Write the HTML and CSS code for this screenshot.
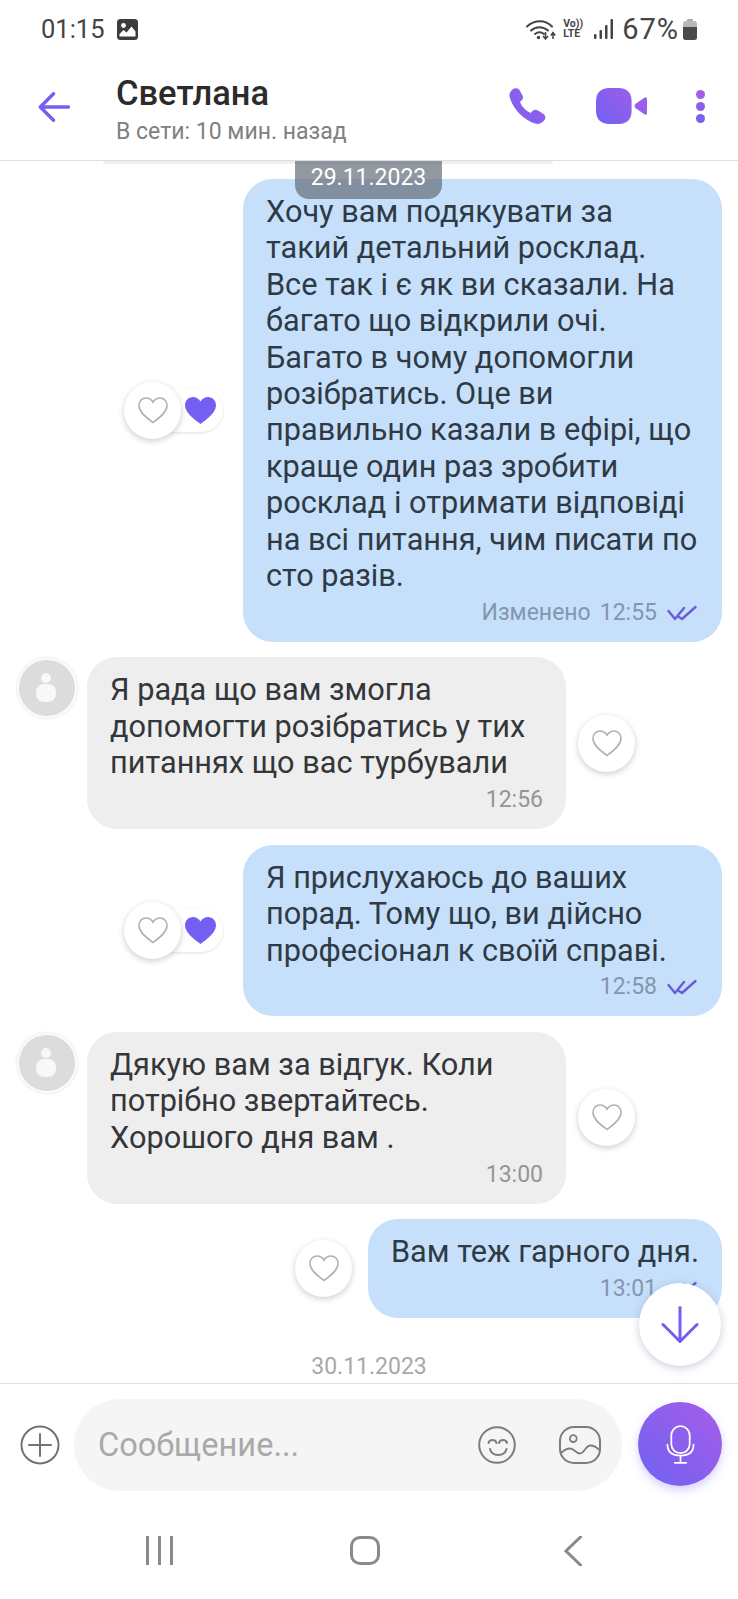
FILE: index.html
```html
<!DOCTYPE html>
<html lang="uk">
<head>
<meta charset="utf-8">
<title>Светлана</title>
<link rel="stylesheet" href="styles.css">
</head>
<body>
<div class="app">
  <div class="statusbar">
    <span class="clock">01:15</span>
    <svg class="sb-img" viewBox="0 0 21 21"><rect width="21" height="21" rx="3.5" fill="#3c3c3c"/><circle cx="6.5" cy="6.5" r="2.4" fill="#fff"/><path d="M2.5 17.5V15l4-4 3 2.5 5-6 4 5v5z" fill="#fff"/></svg>
    <div class="sb-right">
      <svg class="sb-wifi" viewBox="0 0 31 21"><g fill="none" stroke="#444" stroke-width="2" stroke-linecap="round"><path d="M1 7.5C8.5.5 19.500.5 26 7.500"/><path d="M5 11.500C10 7 17 7 22 11.500"/><path d="M9 15c3-2.300 6-2.300 9 0"/></g><circle cx="12.500" cy="18.500" r="1.700" fill="#444"/><path d="M19.500 13v6M17 17l2.500 3 2.500-3M27 20v-6M24.800 16.500 27 13.500l2.200 3" fill="none" stroke="#444" stroke-width="1.500"/></svg>
      <div class="sb-volte"><span>Vo))</span><span>LTE</span></div>
      <svg class="sb-signal" viewBox="0 0 19 20"><g fill="#444"><rect x="0" y="15" width="2.500" height="5" rx="1"/><rect x="5.500" y="11" width="2.500" height="9" rx="1"/><rect x="11" y="6" width="2.500" height="14" rx="1"/><rect x="16.500" y="0" width="2.500" height="20" rx="1"/></g></svg>
      <span class="battery-text">67%</span>
      <div class="battery"><div class="battery-cap"></div><div class="battery-body"><div class="battery-fill"></div></div></div>
    </div>
  </div>

  <header class="header">
    <svg class="back" viewBox="0 0 32 30"><path d="M30.500 15H2.500M15.500 1.800 2.300 15l13.200 13.200" fill="none" stroke="#7360f2" stroke-width="3.400" stroke-linecap="round" stroke-linejoin="round"/></svg>
    <div class="who">
      <div class="name">Светлана</div>
      <div class="seen">В сети: 10 мин. назад</div>
    </div>
    <div class="actions">
      <svg class="phone" viewBox="0 0 37 36"><defs><linearGradient id="g1" x1="0" y1="1" x2="1" y2="0"><stop offset="0" stop-color="#7360f2"/><stop offset="1" stop-color="#a55ee8"/></linearGradient></defs><path fill="url(#g1)" d="M4 1C6-.5 9 0 10.500 2l3 5.500c1 2 .5 3.500-1 5L11 14c1.500 4 6 9 10.500 11l2-2c1.500-1.500 3.500-1.500 5.500-.5l5.500 3.500c2 1.500 2.500 4 1 6-2 2.500-4.500 4-7.500 4C15 33 3 20 .5 8 .2 5 2 2.500 4 1Z"/></svg>
      <svg class="video" viewBox="0 0 51 36"><defs><linearGradient id="g2" gradientUnits="userSpaceOnUse" x1="0" y1="36" x2="51" y2="0"><stop offset="0" stop-color="#7360f2"/><stop offset="1" stop-color="#a55ee8"/></linearGradient></defs><path fill="url(#g2)" d="M13 0h10c8 0 12.600 5 12.600 13v10c0 8-4.600 13-12.600 13H13C5 36 0 31 0 23V13C0 5 5 0 13 0Z"/><path fill="url(#g2)" d="M40 15.500 48 10c2-1.300 3-.5 3 1.500v13c0 2-1 2.800-3 1.500l-8-5.500c-2-1.500-2-3.500 0-5z"/></svg>
      <div class="dots"><i></i><i></i><i></i></div>
    </div>
  </header>

  <main class="chat">
    <div class="prev-bubble"></div>
    <div class="date-pill">29.11.2023</div>

    <div class="row out">
      <div class="reacts">
        <div class="heart-btn"><svg viewBox="0 0 30 27"><use href="#h"/></svg></div>
        <div class="liked"><svg viewBox="0 0 31 27"><path fill="#7360f2" d="M15.500 27C10 23 0 16 0 8.500 0 3.500 3.500 0 8 0c3 0 5.800 1.500 7.500 4.500C17.200 1.500 20 0 23 0c4.500 0 8 3.500 8 8.500C31 16 21 23 15.500 27Z"/></svg></div>
      </div>
      <div class="bubble blue wide">
        <p>Хочу вам подякувати за<br>такий детальний росклад.<br>Все так і є як ви сказали. На<br>багато що відкрили очі.<br>Багато в чому допомогли<br>розібратись. Оце ви<br>правильно казали в ефірі, що<br>краще один раз зробити<br>росклад і отримати відповіді<br>на всі питання, чим писати по<br>сто разів.</p>
        <div class="meta"><span class="edited">Изменено</span><span>12:55</span><svg class="ticks" viewBox="0 0 30 16"><path d="M1.500 6 8 14 17 3M12 12l3 2L28.500 2" fill="none" stroke="#6a5bdc" stroke-width="2.400" stroke-linecap="round" stroke-linejoin="round"/></svg></div>
      </div>
    </div>

    <div class="row in">
      <div class="avatar"><i class="head"></i><i class="body-shape"></i></div>
      <div class="bubble grey wide">
        <p>Я рада що вам змогла<br>допомогти розібратись у тих<br>питаннях що вас турбували</p>
        <div class="meta"><span>12:56</span></div>
      </div>
      <div class="heart-btn"><svg viewBox="0 0 30 27"><use href="#h"/></svg></div>
    </div>

    <div class="row out">
      <div class="reacts">
        <div class="heart-btn"><svg viewBox="0 0 30 27"><use href="#h"/></svg></div>
        <div class="liked"><svg viewBox="0 0 31 27"><path fill="#7360f2" d="M15.500 27C10 23 0 16 0 8.500 0 3.500 3.500 0 8 0c3 0 5.800 1.500 7.500 4.500C17.200 1.500 20 0 23 0c4.500 0 8 3.500 8 8.500C31 16 21 23 15.500 27Z"/></svg></div>
      </div>
      <div class="bubble blue wide">
        <p>Я прислухаюсь до ваших<br>порад. Тому що, ви дійсно<br>професіонал к своїй справі.</p>
        <div class="meta"><span>12:58</span><svg class="ticks" viewBox="0 0 30 16"><path d="M1.500 6 8 14 17 3M12 12l3 2L28.500 2" fill="none" stroke="#6a5bdc" stroke-width="2.400" stroke-linecap="round" stroke-linejoin="round"/></svg></div>
      </div>
    </div>

    <div class="row in">
      <div class="avatar"><i class="head"></i><i class="body-shape"></i></div>
      <div class="bubble grey wide">
        <p>Дякую вам за відгук. Коли<br>потрібно звертайтесь.<br>Хорошого дня вам .</p>
        <div class="meta"><span>13:00</span></div>
      </div>
      <div class="heart-btn"><svg viewBox="0 0 30 27"><use href="#h"/></svg></div>
    </div>

    <div class="row out plain">
      <div class="heart-btn"><svg viewBox="0 0 30 27"><use href="#h"/></svg></div>
      <div class="bubble blue">
        <p>Вам теж гарного дня.</p>
        <div class="meta"><span>13:01</span><svg class="ticks" viewBox="0 0 30 16"><path d="M1.500 6 8 14 17 3M12 12l3 2L28.500 2" fill="none" stroke="#6a5bdc" stroke-width="2.400" stroke-linecap="round" stroke-linejoin="round"/></svg></div>
      </div>
    </div>

    <div class="date-plain">30.11.2023</div>

    <button class="fab"><svg viewBox="0 0 38 38"><path d="M19 1.500v34M2 18.500l17 17 17-17" fill="none" stroke="#7360f2" stroke-width="3" stroke-linecap="round" stroke-linejoin="round"/></svg></button>
  </main>

  <footer class="composer">
    <svg class="plus" viewBox="0 0 40 40"><circle cx="20" cy="20" r="18.500" fill="none" stroke="#737373" stroke-width="2"/><path d="M20 9v22M9 20h22" stroke="#737373" stroke-width="2" stroke-linecap="round"/></svg>
    <div class="input">
      <span class="placeholder">Сообщение...</span>
      <svg class="smile" viewBox="0 0 38 38"><circle cx="19" cy="19" r="17.800" fill="none" stroke="#7c7c7c" stroke-width="2"/><path d="M10.500 17c1-4 7-4 8 0M21 17c1-4 7-4 8 0M12 23c2 8 14.500 8 16.500 0" fill="none" stroke="#7c7c7c" stroke-width="2" stroke-linecap="round"/></svg>
      <svg class="sticker" viewBox="0 0 42 38"><rect x="1" y="1" width="40" height="36" rx="14" fill="none" stroke="#7c7c7c" stroke-width="2"/><circle cx="14.300" cy="12.600" r="3.400" fill="none" stroke="#7c7c7c" stroke-width="1.800"/><path d="M2 27c3-3 6-4.500 9-4.500 4 0 6 5 10 5s6-8 10-8c4 0 7 2 9 4.500" fill="none" stroke="#7c7c7c" stroke-width="1.800"/></svg>
    </div>
    <button class="mic"><svg viewBox="0 0 30 40"><rect x="5.500" y="1" width="19" height="28" rx="9.500" fill="none" stroke="#fff" stroke-width="1.800"/><path d="M1.500 20c0 8 5.500 11.500 13.500 11.500S28.500 28 28.500 20M15 31.500V39M9 39h12" fill="none" stroke="#fff" stroke-width="1.800" stroke-linecap="round"/></svg></button>
  </footer>

  <nav class="navbar">
    <div class="nav-recents"><i></i><i></i><i></i></div>
    <div class="nav-home"></div>
    <svg class="nav-back" viewBox="0 0 18 30"><path d="M16.500 1 2 15l14.500 14" fill="none" stroke="#8a8a8a" stroke-width="3" stroke-linecap="round"/></svg>
  </nav>
</div>

<svg class="defs" width="0" height="0"><defs><path id="h" d="M15 25.500C9.500 21.500 1 15.500 1 8.500 1 4 4.200 1 8 1c3 0 5.500 1.500 7 4.200C16.500 2.500 19 1 22 1c3.800 0 7 3 7 7.500 0 7-8.500 13-14 17Z" fill="none" stroke="#b0b0b0" stroke-width="1.600"/></defs></svg>
</body>
</html>
```
FILE: styles.css
```css
* { box-sizing: border-box; }
html, body { margin: 0; padding: 0; background: #fff; }
body { font-family: Roboto, "Noto Sans", sans-serif; color: #2f3338; }
i { display: block; }
p { margin: 0; }
button { border: 0; padding: 0; cursor: pointer; }
.defs { position: absolute; }

.app { width: 738px; height: 1599px; display: flex; flex-direction: column; overflow: hidden; background: #fff; }

/* status bar */
.statusbar { height: 50px; flex: none; display: flex; align-items: flex-end; padding: 0 41px 9px; color: #444; }
.clock { font-size: 25.500px; line-height: 24px; }
.sb-img { width: 21px; height: 21px; margin-left: 12px; margin-bottom: 1px; }
.sb-right { margin-left: auto; display: flex; align-items: center; height: 24px; }
.sb-wifi { width: 31px; height: 21px; margin-right: 6px; }
.sb-volte { width: 22px; font-size: 10.500px; line-height: 10.500px; font-weight: 700; color: #444; text-align: left; margin-right: 9px; }
.sb-volte span { display: block; }
.sb-signal { width: 19px; height: 20px; margin-right: 9px; }
.battery-text { font-size: 29px; line-height: 24px; margin-right: 4px; letter-spacing: 1px; }
.battery { width: 14px; height: 21px; display: flex; flex-direction: column; align-items: center; }
.battery-cap { width: 6px; height: 2px; background: #aaa; border-radius: 1px 1px 0 0; }
.battery-body { width: 14px; height: 19px; border-radius: 3px; background: #b8b8b8; display: flex; align-items: flex-end; overflow: hidden; }
.battery-fill { width: 100%; height: 13px; background: #4a4a4a; }

/* header */
.header { height: 111px; flex: none; display: flex; align-items: flex-start; border-bottom: 1px solid #dedede; padding: 0 33px 0 38px; position: relative; z-index: 3; background: #fff; }
.back { width: 32px; height: 30px; margin-top: 42px; flex: none; }
.who { margin-left: 46px; padding-top: 24px; }
.name { font-size: 34.500px; line-height: 38px; font-weight: 500; color: #2b2b2b; }
.seen { font-size: 23px; line-height: 26px; color: #808080; margin-top: 7px; }
.actions { margin-left: auto; display: flex; align-items: center; height: 36px; margin-top: 38px; }
.phone { width: 37px; height: 36px; }
.video { width: 51px; height: 36px; margin-left: 50px; }
.dots { margin-left: 49px; display: flex; flex-direction: column; gap: 3px; }
.dots i { width: 9px; height: 9px; border-radius: 50%; background: #8f5fec; }
.dots i:first-child { background: #a55ee8; }
.dots i:last-child { background: #7a60f0; }

/* chat */
.chat { height: 1222px; flex: none; position: relative; overflow: hidden; display: flex; flex-direction: column; gap: 15.500px; }
.prev-bubble { width: 450px; height: 2.500px; margin-left: 103px; background: #efefef; border-radius: 0 0 8px 8px; flex: none; }
.date-pill { position: absolute; left: 295px; top: 0; width: 147px; height: 38px; border-radius: 0 0 14px 14px; background: rgba(96, 104, 116, .68); color: #fff; font-size: 23px; line-height: 34px; text-align: center; z-index: 2; }
.row { display: flex; align-items: center; flex: none; }
.row.out { justify-content: flex-end; padding-right: 16px; }
.row.in { padding-left: 17px; }
.bubble { border-radius: 30px; padding: 15px 23px 0; font-size: 30.700px; line-height: 36.400px; flex: none; }
.bubble.wide { width: 479px; }
.blue { background: #c6e0fb; color: #2f3a44; }
.grey { background: #eee; color: #33363a; }
.meta { display: flex; justify-content: flex-end; align-items: center; gap: 9px; font-size: 23px; line-height: 30px; height: 47.500px; padding-top: 2px; padding-bottom: 12.500px; color: #959595; }
.blue .meta { color: #8496ad; margin-right: 2px; }
.ticks { width: 30px; height: 16px; margin-left: 1px; }
.avatar { width: 60px; height: 60px; border-radius: 50%; background: #dcdcdc; border: 2px solid #fbfbfb; box-shadow: 0 0 3px rgba(0,0,0,.14); position: relative; align-self: flex-start; margin-top: 1px; margin-right: 10px; flex: none; }
.head { position: absolute; left: 21.700px; top: 12.700px; width: 10px; height: 10px; border-radius: 50%; background: #f8f8f8; }
.body-shape { position: absolute; left: 16.700px; top: 24px; width: 20px; height: 18px; border-radius: 8px; background: #f8f8f8; }
.heart-btn { width: 57px; height: 57px; border-radius: 50%; background: #fff; box-shadow: 0 2px 6px rgba(0,0,0,.2); display: flex; align-items: center; justify-content: center; position: relative; z-index: 1; flex: none; }
.heart-btn svg { width: 30px; height: 27px; }
.row.in .heart-btn { margin-left: 12px; }
.row.plain .heart-btn { margin-right: 16px; }
.reacts { display: flex; align-items: center; margin-right: 20px; }
.liked { width: 56px; height: 43px; margin-left: -14px; border-radius: 0 22px 22px 0; background: #fff; box-shadow: 0 1px 3px rgba(0,0,0,.12); display: flex; align-items: center; justify-content: flex-end; padding-right: 7px; }
.liked svg { width: 31px; height: 27px; }
.date-plain { font-size: 23px; line-height: 26px; text-align: center; color: #a8a8a8; margin-top: 20px; flex: none; }
.fab { position: absolute; left: 639px; top: 1122px; width: 82px; height: 83px; border-radius: 50%; background: #fff; box-shadow: 0 2px 8px rgba(60,50,120,.25); display: flex; align-items: center; justify-content: center; z-index: 2; }
.fab svg { width: 38px; height: 38px; }

/* composer */
.composer { height: 123px; flex: none; border-top: 1px solid #dedede; display: flex; align-items: flex-start; padding: 15px 17px 0 20px; position: relative; }
.plus { width: 40px; height: 40px; margin-top: 26px; margin-right: 14px; flex: none; }
.input { width: 548px; height: 92px; border-radius: 46px; background: #f5f5f5; display: flex; align-items: center; padding-left: 24px; flex: none; }
.placeholder { font-size: 32.600px; line-height: 40px; color: #a9a9a9; }
.smile { width: 38px; height: 38px; margin-left: auto; flex: none; }
.sticker { width: 42px; height: 38px; margin-left: 43px; margin-right: 21px; flex: none; }
.mic { width: 84px; height: 84px; border-radius: 50%; margin-left: 16px; margin-top: 3px; flex: none; background: linear-gradient(45deg, #6f62f2, #a75de8); box-shadow: 0 4px 10px rgba(115,96,242,.3); display: flex; align-items: center; justify-content: center; }
.mic svg { width: 29px; height: 39px; }

/* nav */
.navbar { flex: 1; position: relative; display: flex; align-items: center; padding-bottom: 4px; }
.nav-recents { display: flex; gap: 9px; margin-left: 146px; }
.nav-recents i { width: 3px; height: 29px; background: #8a8a8a; }
.nav-home { width: 30px; height: 29px; border: 3px solid #8a8a8a; border-radius: 10px; margin-left: 177px; }
.nav-back { width: 18px; height: 30px; margin-left: 184px; }
```
